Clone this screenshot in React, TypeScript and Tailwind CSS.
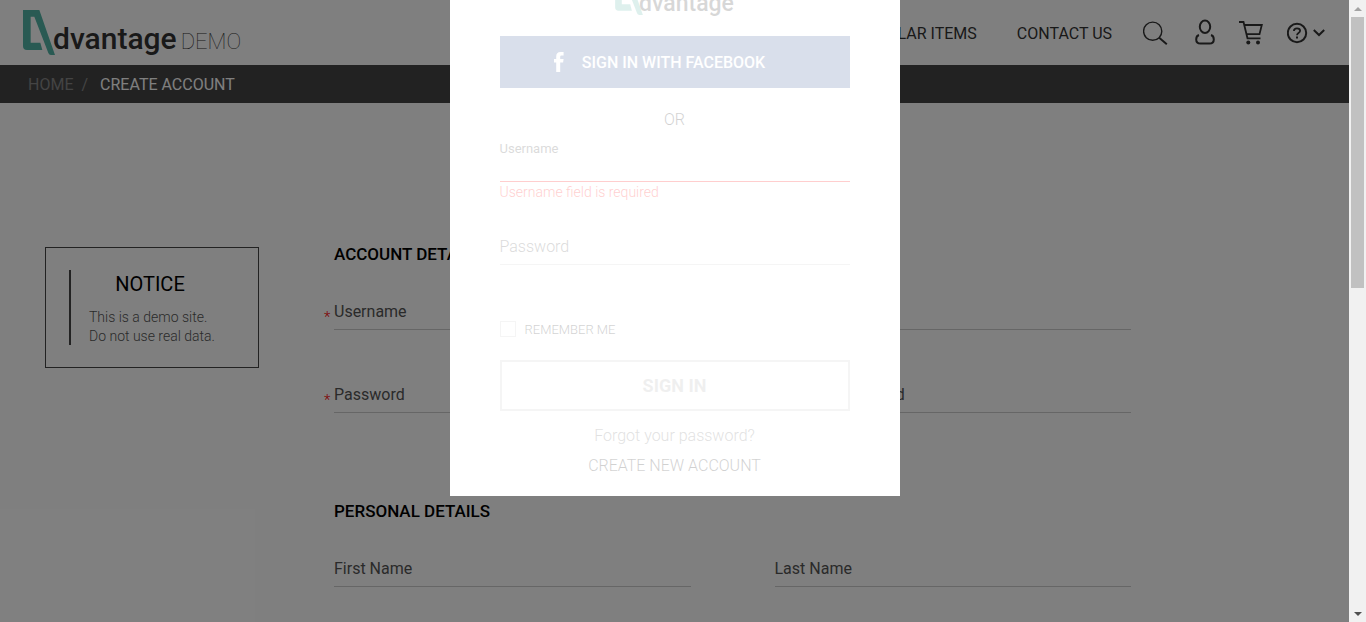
import React from "react";

function LogoMark({ className }: { className: string }) {
  return (
    <svg viewBox="0 0 96 135" className={className} aria-hidden="true">
      <path
        fill="currentColor"
        d="M0 0H49L96 135H84Q78 135 76 129L34 20H23V98H52L58 120H12Q0 120 0 108Z"
      />
    </svg>
  );
}

function SearchIcon() {
  return (
    <svg width="28" height="28" viewBox="0 0 28 28" fill="none" stroke="currentColor" aria-hidden="true">
      <circle cx="9.7" cy="12.2" r="9.1" strokeWidth="1.4" />
      <path d="M16.2 18.7L23.8 25.2" strokeWidth="1.9" />
    </svg>
  );
}

function UserIcon() {
  return (
    <svg width="20" height="28" viewBox="0 0 20 28" fill="none" stroke="currentColor" strokeWidth="2" aria-hidden="true">
      <ellipse cx="10" cy="7.8" rx="5.2" ry="6.2" />
      <path d="M4 16Q1.2 16.8 1.2 20.5Q1.2 24.6 5.5 24.6H14.5Q18.8 24.6 18.8 20.5Q18.8 16.8 16 16" />
    </svg>
  );
}

function CartIcon() {
  return (
    <svg width="24" height="28" viewBox="0 0 24 28" fill="none" stroke="currentColor" strokeWidth="1.8" aria-hidden="true">
      <path d="M0 3H4.5L8.5 19.3H21.5M5.3 6H22.8L20.5 15.2H7.6" />
      <circle cx="9.3" cy="23.4" r="2" fill="currentColor" stroke="none" />
      <circle cx="19" cy="23.4" r="2" fill="currentColor" stroke="none" />
    </svg>
  );
}

function HelpIcon() {
  return (
    <svg width="38" height="28" viewBox="0 0 38 28" fill="none" stroke="currentColor" strokeWidth="2" aria-hidden="true">
      <circle cx="10" cy="14" r="9.2" />
      <path d="M6.9 12Q6.9 9.3 10 9.3T13.1 11.8Q13.1 13 11.5 14.1Q10 15.2 10 16.2" strokeWidth="1.8" />
      <path d="M10 17.6V19.6" />
      <path d="M26.8 11L32 16L37.2 11" />
    </svg>
  );
}

function Field({ id, label, type = "text", required = false }: { id: string; label: string; type?: string; required?: boolean }) {
  return (
    <div className="relative grid h-8 border-b border-[#ccc]">
      {required && (
        <span className="absolute top-2 -left-2.5 text-[15px] font-light text-[#f00]" aria-hidden="true">
          *
        </span>
      )}
      <label htmlFor={id} className="col-start-1 row-start-1 pt-0.5 text-base text-[#555]">
        {label}
      </label>
      <input id={id} type={type} required={required} className="col-start-1 row-start-1 w-full bg-transparent outline-none" />
    </div>
  );
}

function Header() {
  return (
    <header className="flex h-[65px] items-center justify-between pr-6 pl-[23px] text-[#333]">
      <a href="#home" className="flex items-start pt-1">
        <LogoMark className="h-[45px] w-8 text-[#53b4a6]" />
        <span className="-ml-0.5 pt-[11px] text-[30px] leading-9 font-medium">dvantage</span>
        <span className="pt-3.5 pl-1 text-[22px] leading-9 font-thin">DEMO</span>
      </a>
      <div className="flex items-center">
        <nav className="flex gap-10 pt-0.5 pr-[31px] text-base">
          <a href="#special-offer">SPECIAL OFFER</a>
          <a href="#popular-items">POPULAR ITEMS</a>
          <a href="#contact-us">CONTACT US</a>
        </nav>
        <div className="flex items-center gap-6">
          <button type="button" aria-label="Search"><SearchIcon /></button>
          <button type="button" aria-label="Account"><UserIcon /></button>
          <button type="button" aria-label="Cart"><CartIcon /></button>
          <button type="button" aria-label="Help"><HelpIcon /></button>
        </div>
      </div>
    </header>
  );
}

function Notice() {
  return (
    <aside className="h-[121px] w-[214px] shrink-0 border border-[#444] px-[23px] py-[22px]">
      <div className="h-[75px] border-l-2 border-[#444] pl-[18px]">
        <h2 className="pr-6 text-center text-xl leading-7 text-black">NOTICE</h2>
        <p className="pt-2.5 text-sm leading-[19px] font-light whitespace-nowrap text-[#555]">
          This is a demo site.
          <br />
          Do not use real data.
        </p>
      </div>
    </aside>
  );
}

function RegisterForm() {
  return (
    <form className="min-w-0 flex-1">
      <section>
        <h3 className="text-[17px] leading-[15px] font-medium text-black">ACCOUNT DETAILS</h3>
        <div className="grid grid-cols-2 gap-x-[84px] gap-y-[51px] pt-9">
          <Field id="reg-username" label="Username" required />
          <Field id="reg-email" label="Email" type="email" required />
          <Field id="reg-password" label="Password" type="password" required />
          <Field id="reg-confirm" label="Confirm password" type="password" required />
        </div>
      </section>
      <section className="pt-[91px]">
        <h3 className="text-[17px] leading-[15px] font-medium text-black">PERSONAL DETAILS</h3>
        <div className="grid grid-cols-2 gap-x-[84px] pt-9">
          <Field id="reg-first" label="First Name" />
          <Field id="reg-last" label="Last Name" />
        </div>
      </section>
    </form>
  );
}

function LoginDialog() {
  return (
    <div role="dialog" aria-label="Sign in" className="-mt-9 h-fit w-[450px] bg-white px-[50px] pb-[18px]">
      <form className="flex flex-col opacity-[0.19]">
        <div className="flex h-[72px] items-start justify-center pt-3 text-[#333]">
          <LogoMark className="h-[39px] w-7 text-[#53b4a6]" />
          <span className="-ml-1 pt-3 text-[23px] leading-8 font-medium">dvantage</span>
        </div>
        <button type="button" className="flex h-[52px] items-center justify-center gap-[18px] bg-[#3b5998] pr-[30px] text-base font-medium text-white">
          <svg width="10" height="20" viewBox="0 0 10 20" fill="currentColor" aria-hidden="true">
            <path d="M2.2 20V10.6H0V7H2.2V4.6Q2.2 0 6.4 0H9.6V3.5H7.5Q6.2 3.5 6.2 4.8V7H9.6L9.1 10.6H6.2V20Z" />
          </svg>
          <span className="pt-0.5">SIGN IN WITH FACEBOOK</span>
        </button>
        <p className="pt-5 text-center text-base font-light text-[#111]">OR</p>
        <label htmlFor="login-username" className="pt-[7px] text-[13px] leading-5 text-[#444]">Username</label>
        <input id="login-username" className="h-[23px] w-full border-b border-[#f00] bg-transparent outline-none" />
        <p className="text-sm leading-5 font-light text-[#f00]">Username field is required</p>
        <div className="mt-[31px] grid h-8 border-b border-[#ccc]">
          <label htmlFor="login-password" className="col-start-1 row-start-1 pt-0.5 text-base font-light text-[#444]">Password</label>
          <input id="login-password" type="password" className="col-start-1 row-start-1 w-full bg-transparent outline-none" />
        </div>
        <label className="flex items-center gap-[9px] pt-[53px] text-[13px] leading-5 font-light text-[#111]">
          <input type="checkbox" className="size-4 appearance-none border border-[#ccc] bg-white" />
          <span className="pt-0.5">REMEMBER ME</span>
        </label>
        <button type="button" className="mt-5 h-[51px] border-2 border-[#ccc] text-lg font-bold text-[#b0b0b0]">SIGN IN</button>
        <a href="#forgot" className="pt-[13px] text-center text-base font-light text-[#666]">Forgot your password?</a>
        <a href="#create" className="pt-1.5 text-center text-base font-light text-[#111]">CREATE NEW ACCOUNT</a>
      </form>
    </div>
  );
}

function Scrollbar() {
  return (
    <div className="flex w-[17px] shrink-0 flex-col items-center justify-between bg-[#f1f1f1] pb-1.5" aria-hidden="true">
      <div className="flex h-[47%] w-full flex-col items-center gap-[6px] pt-[7px] pb-0.5">
        <svg width="8" height="4" viewBox="0 0 8 4" fill="#a3a3a3"><path d="M0 4L4 0L8 4Z" /></svg>
        <div className="w-[13px] flex-1 bg-[#c1c1c1]" />
      </div>
      <svg width="8" height="4" viewBox="0 0 8 4" fill="#505050"><path d="M0 0H8L4 4Z" /></svg>
    </div>
  );
}

export default function App() {
  return (
    <div className="flex h-screen overflow-hidden bg-white font-['Roboto',sans-serif]">
      <div className="relative min-w-0 flex-1 overflow-hidden">
        <Header />
        <nav className="flex h-[38px] items-center bg-[#444] pt-0.5 pl-7 text-base">
          <a href="#home" className="text-[#888]">HOME</a>
          <span className="px-2 text-[#888]">/</span>
          <span className="pl-1 text-white">CREATE ACCOUNT</span>
        </nav>
        <main className="flex gap-[75px] pt-36 pr-[218px] pl-[45px]">
          <Notice />
          <RegisterForm />
        </main>
        <div className="absolute inset-0 flex items-start justify-center bg-black/50">
          <LoginDialog />
        </div>
      </div>
      <Scrollbar />
    </div>
  );
}
